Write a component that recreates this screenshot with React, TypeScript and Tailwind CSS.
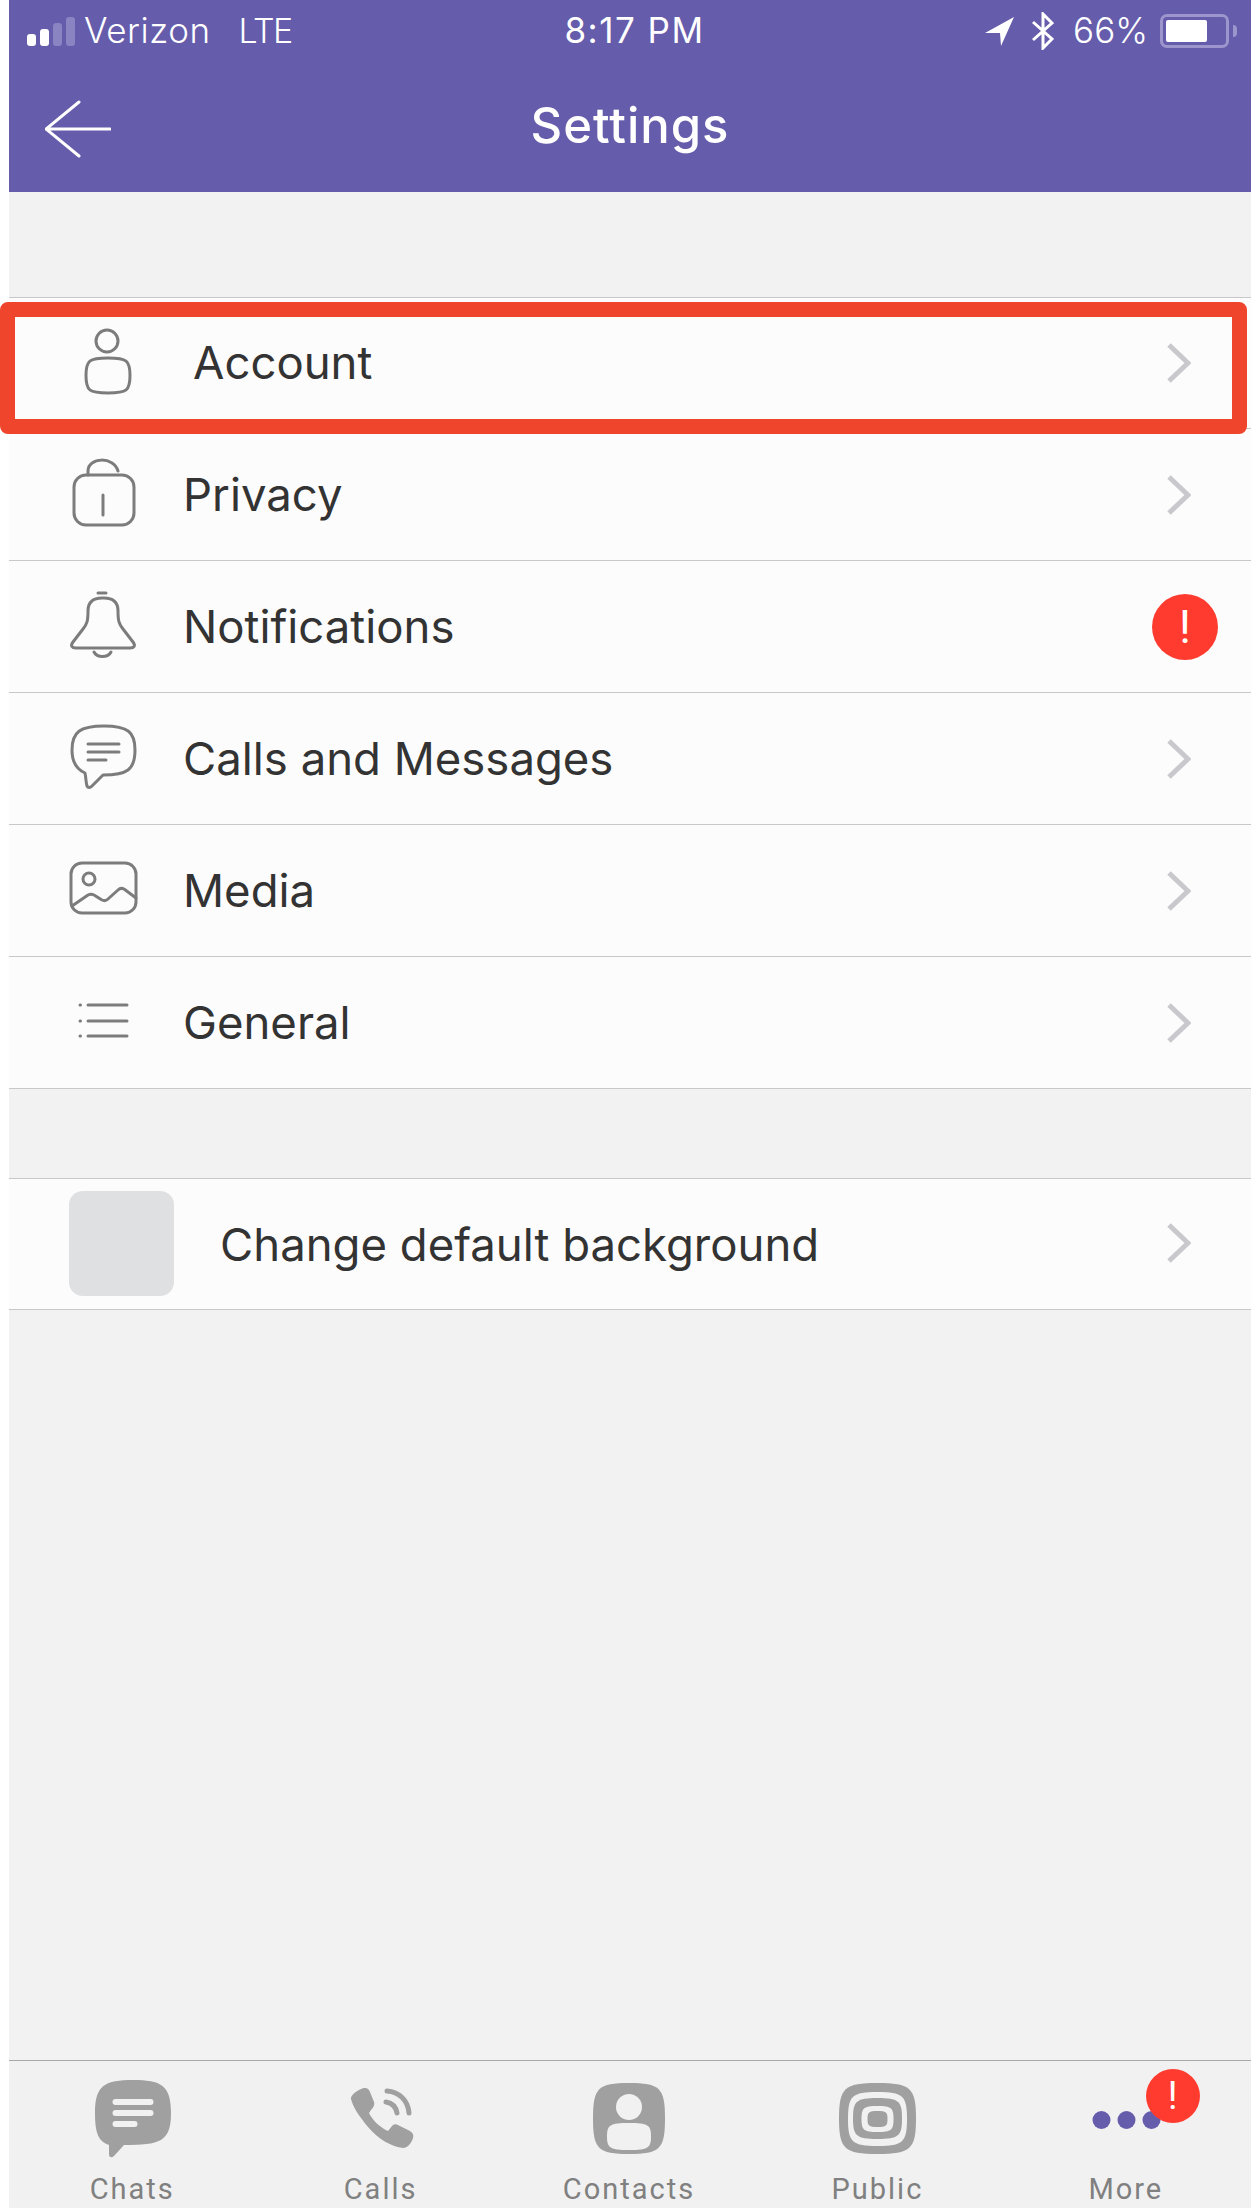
import { ReactNode } from "react";

// superellipse-ish rounded square used by the tab bar icons
function squircle(x: number, y: number, w: number, h: number) {
  const cx = x + w / 2;
  const cy = y + h / 2;
  return `M${cx} ${y}C${x + w * 0.93} ${y} ${x + w} ${y + h * 0.07} ${x + w} ${cy}C${x + w} ${y + h * 0.93} ${x + w * 0.93} ${y + h} ${cx} ${y + h}C${x + w * 0.07} ${y + h} ${x} ${y + h * 0.93} ${x} ${cy}C${x} ${y + h * 0.07} ${x + w * 0.07} ${y} ${cx} ${y}Z`;
}

function RowIcon({ children }: { children: ReactNode }) {
  return (
    <svg
      width="80"
      height="80"
      viewBox="0 0 80 80"
      fill="none"
      stroke="#7c7c7c"
      strokeWidth="3"
      strokeLinecap="round"
      strokeLinejoin="round"
      className="ml-[55px] shrink-0"
    >
      {children}
    </svg>
  );
}

function Chevron() {
  return (
    <svg width="24" height="40" viewBox="0 0 24 40" fill="none" stroke="#c8c8cd" strokeWidth="5" className="ml-auto mr-[60px] shrink-0">
      <path d="M2 2l19 18L2 38" />
    </svg>
  );
}

function AlertBadge({ className }: { className: string }) {
  return (
    <div className={`flex items-center justify-center rounded-full bg-[#ff3b30] font-['Roboto',sans-serif] font-normal text-white ${className}`}>
      !
    </div>
  );
}

function Row({
  icon,
  label,
  labelClass,
  heightClass,
  trailing,
}: {
  icon: ReactNode;
  label: string;
  labelClass?: string;
  heightClass?: string;
  trailing?: ReactNode;
}) {
  return (
    <div className={`flex items-center border-b border-[#c8c8c8] bg-[#fcfcfc] ${heightClass ?? "h-[132px]"}`}>
      {icon}
      <span className={`text-[45.5px] leading-none text-[#333333] ${labelClass ?? "ml-[39px]"}`}>{label}</span>
      {trailing ?? <Chevron />}
    </div>
  );
}

function Tab({ label, children }: { label: string; children: ReactNode }) {
  return (
    <div className="relative flex flex-1 flex-col items-center pt-[14px]">
      {children}
      <span className="mt-[12px] pr-[2px] font-['Roboto',sans-serif] text-[29px] leading-[34px] tracking-[2px] text-[#808080]">{label}</span>
    </div>
  );
}

function TabSvg({ children }: { children: ReactNode }) {
  return (
    <svg width="100" height="85" viewBox="0 0 100 85" fill="#a0a0a0" className="shrink-0">
      {children}
    </svg>
  );
}

export default function App() {
  return (
    <div className="flex h-[2208px] w-[1251px] flex-col bg-white pl-[9px] font-['Inter',sans-serif]">
      <div className="relative flex flex-1 flex-col bg-[#f2f2f2]">
        {/* Header */}
        <header className="h-[192px] shrink-0 bg-[#655cab] text-white">
          <div className="flex h-[60px] items-center pt-[1px]">
            <div className="flex flex-1 items-center">
              <div className="ml-[18px] flex h-[30px] items-end gap-[4px]">
                <div className="h-[12px] w-[9px] rounded-[3px] bg-white" />
                <div className="h-[17px] w-[9px] rounded-[3px] bg-white" />
                <div className="h-[23px] w-[9px] rounded-[3px] bg-[#8b84c2]" />
                <div className="h-[29px] w-[9px] rounded-[3px] bg-[#8b84c2]" />
              </div>
              <span className="ml-[9px] text-[35px] font-light leading-none tracking-[0.5px]">Verizon</span>
              <span className="ml-[28px] text-[34px] font-light leading-none tracking-[-1.5px]">LTE</span>
            </div>
            <span className="ml-[23px] text-[35px] leading-none tracking-[1.5px]">8:17 PM</span>
            <div className="flex flex-1 items-center justify-end pr-[14px]">
              <svg width="30" height="30" viewBox="0 0 30 30" fill="#fff" className="shrink-0">
                <path d="M0 17L29 1 16 30 15 17z" />
              </svg>
              <svg width="22" height="38" viewBox="0 0 22 38" fill="none" stroke="#fff" strokeWidth="3" className="ml-[17px] shrink-0">
                <path d="M1 10l19 17-9 9V2l9 9L1 28" />
              </svg>
              <span className="ml-[19px] text-[35px] font-light leading-none">66%</span>
              <div className="ml-[12px] flex h-[34px] w-[69px] shrink-0 items-center rounded-[7px] border-[3px] border-[#9c96cc] pl-[3px]">
                <div className="h-[22px] w-[41px] rounded-[2px] bg-white" />
              </div>
              <div className="ml-[4px] h-[12px] w-[4px] shrink-0 rounded-r-full bg-[#9c96cc]" />
            </div>
          </div>
          <div className="relative flex h-[132px] items-center justify-center pb-[1px]">
            <svg width="66" height="58" viewBox="0 0 66 58" fill="none" stroke="#fff" strokeWidth="3" strokeLinecap="round" className="absolute left-[36px] top-[40px]">
              <path d="M34 2L1 29l33 27M1 29h64" />
            </svg>
            <span className="text-[49px] font-medium leading-none tracking-[1px]">Settings</span>
          </div>
        </header>

        <div className="h-[105px] shrink-0" />

        {/* Menu */}
        <div className="border-t border-[#c8c8c8]">
          <Row
            heightClass="h-[131px]"
            labelClass="ml-[49px]"
            label="Account"
            icon={
              <RowIcon>
                <circle cx="43" cy="18" r="11" />
                <path d={squircle(22, 35, 44, 35)} />
              </RowIcon>
            }
          />
          <Row
            label="Privacy"
            icon={
              <RowIcon>
                <rect x="10" y="20" width="60" height="50" rx="12" />
                <path d="M24 20v-4c0-14 26-15 30 0M39 40v20" />
              </RowIcon>
            }
          />
          <Row
            label="Notifications"
            trailing={<AlertBadge className="ml-auto mr-[33px] h-[66px] w-[66px] text-[46px] leading-none" />}
            icon={
              <RowIcon>
                <path d="M34 6h8M38 11c-10 0-14 5-14 13 0 10-1 13-5 18l-10 13c-3 4-1 6 3 6h54c4 0 6-2 3-6l-10-13c-4-5-5-8-5-18 0-8-4-13-14-13zM30 65c3 6 14 6 17 0" />
              </RowIcon>
            }
          />
          <Row
            label="Calls and Messages"
            icon={
              <RowIcon>
                <path d="M40 7C16 7 8 13 8 31c0 12 4 19 13 23 1 5 1 10 2 13 1 2 3 2 5 0l11-11c24 0 32-5 32-25C71 13 64 7 40 7z" />
                <path d="M24 25h31M24 33h31M24 41h18" />
              </RowIcon>
            }
          />
          <Row
            label="Media"
            icon={
              <RowIcon>
                <rect x="7" y="12" width="65" height="50" rx="11" />
                <circle cx="25" cy="28" r="6" />
                <path d="M8 55l16-11c2-1 4-1 6 0l8 5c2 1 4 1 6-1l10-9c2-2 4-2 6-1l12 9" />
              </RowIcon>
            }
          />
          <Row
            label="General"
            icon={
              <RowIcon>
                <path d="M24 22h39M24 38h39M24 53h39" />
                <path d="M16 22h.5M16 38h.5M16 53h.5" />
              </RowIcon>
            }
          />
        </div>

        <div className="h-[90px] shrink-0 border-b border-[#c8c8c8]" />

        <div className="flex h-[131px] items-center border-b border-[#c8c8c8] bg-[#fcfcfc] pb-[2px]">
          <div className="ml-[60px] h-[105px] w-[105px] shrink-0 rounded-[14px] bg-[#dfe0e2]" />
          <span className="ml-[46px] mt-[4px] text-[45.5px] leading-none text-[#333333]">Change default background</span>
          <Chevron />
        </div>

        <div className="flex-1" />

        {/* Tab bar */}
        <nav className="flex h-[148px] shrink-0 border-t border-[#a9a9a9] bg-[#f1f1f1]">
          <Tab label="Chats">
            <TabSvg>
              <path d="M50 5C22 5 12 10 12 38c0 22 4 28 14 32v9c0 4 3 4 5 2l10-11c36 0 47-3 47-32C88 10 78 5 50 5z" />
              <path d="M32.5 27h35M32.5 38h35M32.5 49h19" stroke="#f1f1f1" strokeWidth="6" strokeLinecap="round" />
            </TabSvg>
          </Tab>
          <Tab label="Calls">
            <TabSvg>
              <path d="M33 13C36 13 37 15 38 17L42 27C43 30 41 33 39 35L37 38C41 46 49 53 56 56L60 51C62 49 64 49 66 50L78 56C81 58 82 60 81 63C80 67 76 73 71 73C60 72 46 64 36 52C27 41 21 32 19 24C18 20 28 13 33 13Z" />
              <path d="M55 16C67 17 76 25 77 38M54 27C60 28 64 32 65 38" fill="none" stroke="#a0a0a0" strokeWidth="5" strokeLinecap="round" />
            </TabSvg>
          </Tab>
          <Tab label="Contacts">
            <TabSvg>
              <path d={squircle(13, 8, 72, 71)} />
              <circle cx="49" cy="32" r="13" fill="#f1f1f1" />
              <path d={squircle(27, 48, 44, 27)} fill="#f1f1f1" />
            </TabSvg>
          </Tab>
          <Tab label="Public">
            <TabSvg>
              <path d={squircle(11, 8, 77, 71)} />
              <path d={squircle(20, 17, 59, 54)} fill="#f1f1f1" />
              <path d={squircle(25, 23, 49, 41)} />
              <path d={squircle(33.5, 31, 32, 26)} fill="#f1f1f1" />
              <path d={squircle(39.5, 36, 20, 16)} />
            </TabSvg>
          </Tab>
          <Tab label="More">
            <TabSvg>
              <circle cx="24.5" cy="45" r="9" fill="#655cab" />
              <circle cx="49.5" cy="45" r="9" fill="#655cab" />
              <circle cx="74.5" cy="45" r="9" fill="#655cab" />
            </TabSvg>
            <AlertBadge className="absolute left-[143px] top-[8px] h-[54px] w-[54px] text-[38px] leading-none" />
          </Tab>
        </nav>
      </div>

      {/* Red highlight drawn over the Account row */}
      <div className="absolute left-0 top-[302px] h-[132px] w-[1247px] rounded-[8px] border-[15px] border-[#ef452c]" />
    </div>
  );
}
